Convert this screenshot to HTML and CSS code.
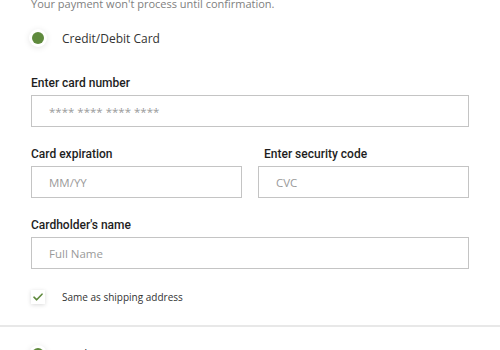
FILE: index.html
```html
<!DOCTYPE html>
<html lang="en">
<head>
  <meta charset="UTF-8" />
  <meta name="viewport" content="width=device-width, initial-scale=1.0"/>
  <title>Payment</title>
  <link rel="stylesheet" href="styles.css">
</head>
<body>
  <div class="payment">
    <p class="note">Your payment won't process until confirmation.</p>

    <label class="option">
      <span class="radio checked"></span>
      Credit/Debit Card
    </label>

    <div class="field">
      <label class="field-label">Enter card number</label>
      <input type="text" placeholder="**** **** **** ****">
    </div>

    <div class="field-row">
      <div class="field">
        <label class="field-label">Card expiration</label>
        <input type="text" placeholder="MM/YY">
      </div>
      <div class="field">
        <label class="field-label indent">Enter security code</label>
        <input type="text" placeholder="CVC">
      </div>
    </div>

    <div class="field">
      <label class="field-label">Cardholder's name</label>
      <input type="text" placeholder="Full Name">
    </div>

    <label class="check-option">
      <span class="checkbox">
        <svg width="10" height="8" viewBox="0 0 10 8"><path d="M1 4.2 L3.7 6.8 L9 1.2" fill="none" stroke="#5f8a3d" stroke-width="1.6" stroke-linecap="round" stroke-linejoin="round"/></svg>
      </span>
      Same as shipping address
    </label>
  </div>

  <hr class="divider">

  <div class="payment">
    <label class="option next">
      <span class="radio checked"></span>
      Apple Pay
    </label>
  </div>
</body>
</html>
```

FILE: styles.css
```css
body {
  margin: 0;
  background: #fff;
  font-family: 'Open Sans', sans-serif;
  color: #222;
  overflow: hidden;
}
.payment {
  padding: 0 31px;
}
.note {
  margin: -3px 0 0;
  font-size: 11px;
  line-height: 14px;
  color: #808080;
}
.option {
  display: flex;
  align-items: center;
  height: 20px;
  margin-top: 17px;
  font-size: 12px;
  color: #333;
}
.option.next {
  margin-top: 17px;
}
.radio {
  width: 12px;
  height: 12px;
  margin-left: 1px;
  margin-right: 18px;
  border-radius: 50%;
  background: #fff;
  box-shadow: 0 0 0 3px #fff, 0 1px 6px 3px rgba(0, 0, 0, 0.1);
}
.radio.checked {
  background: #5f8a3d;
}
.field {
  display: flex;
  flex-direction: column;
  gap: 4px;
  margin-top: 27px;
}
.field-row {
  display: grid;
  grid-template-columns: 1fr 1fr;
  gap: 16px;
  margin-top: 19px;
}
.field-row .field {
  margin-top: 0;
}
.field-row + .field {
  margin-top: 19px;
}
.field-label {
  font-family: Roboto, sans-serif;
  font-size: 12px;
  line-height: 16px;
  font-weight: 500;
  color: #1e1e1e;
}
.field-label.indent {
  padding-left: 6px;
}
input {
  box-sizing: border-box;
  width: 100%;
  height: 32px;
  padding: 0 17px;
  border: 1px solid #c4c4c4;
  border-radius: 0;
  outline: none;
  font-family: inherit;
  font-size: 11.5px;
  color: #222;
  background: #fff;
}
input::placeholder {
  color: #9a9a9a;
}
.check-option {
  display: flex;
  align-items: center;
  margin-top: 21px;
  font-size: 10px;
  color: #333;
}
.checkbox {
  width: 14px;
  height: 14px;
  margin-right: 17px;
  display: flex;
  align-items: center;
  justify-content: center;
  background: #fff;
  box-shadow: 0 1px 4px rgba(0, 0, 0, 0.15);
}
.divider {
  margin: 21px 0 0;
  border: none;
  height: 2px;
  background: #e8e8e8;
}
```
